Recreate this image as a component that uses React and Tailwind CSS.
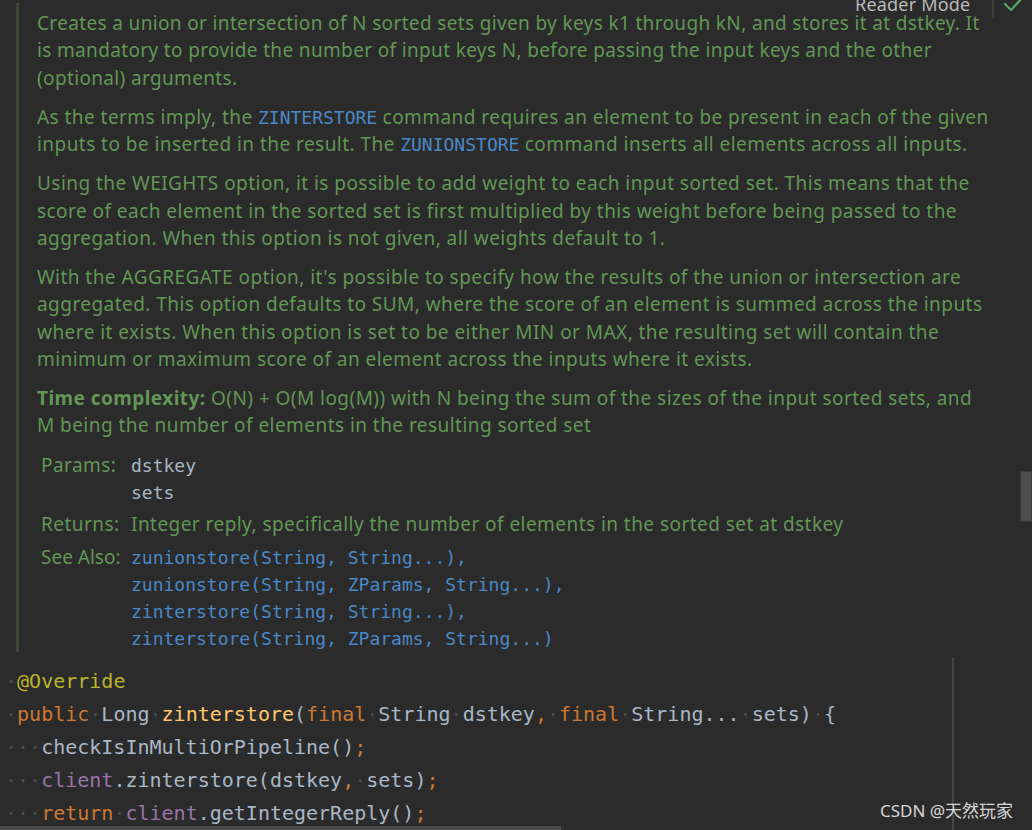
import React from "react";

const sans = "font-['Noto_Sans',sans-serif] tracking-[0.45px]";
const mono = "font-['DejaVu_Sans_Mono',monospace]";

const C = {
  txt: "text-[#a9b7c6]",
  kw: "text-[#cc7832]",
  ann: "text-[#bbb529]",
  fn: "text-[#ffc66d]",
  fld: "text-[#9876aa]",
  ws: "text-[#4d4d4d]",
};

// one code line = list of [text, colour]; "·" marks a visible space
const codeLines = [
  [["·", C.ws], ["@Override", C.ann]],
  [
    ["·", C.ws], ["public", C.kw], ["·", C.ws], ["Long", C.txt], ["·", C.ws],
    ["zinterstore", C.fn], ["(", C.txt], ["final", C.kw], ["·", C.ws], ["String", C.txt],
    ["·", C.ws], ["dstkey", C.txt], [",", C.kw], ["·", C.ws], ["final", C.kw], ["·", C.ws],
    ["String...", C.txt], ["·", C.ws], ["sets)", C.txt], ["·", C.ws], ["{", C.txt],
  ],
  [["···", C.ws], ["checkIsInMultiOrPipeline()", C.txt], [";", C.kw]],
  [["···", C.ws], ["client", C.fld], [".zinterstore(dstkey", C.txt], [",", C.kw], ["·", C.ws], ["sets)", C.txt], [";", C.kw]],
  [["···", C.ws], ["return", C.kw], ["·", C.ws], ["client", C.fld], [".getIntegerReply()", C.txt], [";", C.kw]],
];

const seeAlso = [
  "zunionstore(String, String...),",
  "zunionstore(String, ZParams, String...),",
  "zinterstore(String, String...),",
  "zinterstore(String, ZParams, String...)",
];

function Code({ children }) {
  return <span className={`${mono} text-[18px] tracking-normal text-[#4a88c7]`}>{children}</span>;
}

export default function App() {
  return (
    <div className="relative w-[1032px] h-[830px] overflow-hidden bg-[#2b2b2b]">
      {/* rendered javadoc */}
      <div className="mt-[3px] ml-[16px] w-[976px] border-l-[3px] border-[#3b4a36] pl-[18px] pt-[7px] text-[#629755]">
        <div className={`${sans} text-[19px] leading-[27.25px] whitespace-nowrap flex flex-col gap-[12px]`}>
          <p className="tracking-[0.35px]">
            Creates a union or intersection of N sorted sets given by keys k1 through kN, and stores it at dstkey. It<br />
            is mandatory to provide the number of input keys N, before passing the input keys and the other<br />
            (optional) arguments.
          </p>
          <p>
            As the terms imply, the <Code>ZINTERSTORE</Code> command requires an element to be present in each of the given<br />
            inputs to be inserted in the result. The <Code>ZUNIONSTORE</Code> command inserts all elements across all inputs.
          </p>
          <p>
            Using the WEIGHTS option, it is possible to add weight to each input sorted set. This means that the<br />
            score of each element in the sorted set is first multiplied by this weight before being passed to the<br />
            aggregation. When this option is not given, all weights default to 1.
          </p>
          <p>
            With the AGGREGATE option, it's possible to specify how the results of the union or intersection are<br />
            aggregated. This option defaults to SUM, where the score of an element is summed across the inputs<br />
            where it exists. When this option is set to be either MIN or MAX, the resulting set will contain the<br />
            minimum or maximum score of an element across the inputs where it exists.
          </p>
          <p>
            <b className="font-bold">Time complexity:</b> O(N) + O(M log(M)) with N being the sum of the sizes of the input sorted sets, and<br />
            M being the number of elements in the resulting sorted set
          </p>
        </div>

        <div className="mt-[12px] pl-[4px] grid grid-cols-[90px_1fr] leading-[27px]">
          <div className={`${sans} text-[19px] tracking-[0.2px]`}>Params:</div>
          <div className={`${mono} text-[18px] text-[#a9b7c6]`}>
            <div>dstkey</div>
            <div>sets</div>
          </div>
          <div className={`${sans} text-[19px] tracking-[0.2px] mt-[5px]`}>Returns:</div>
          <div className={`${sans} text-[19px] mt-[5px]`}>
            Integer reply, specifically the number of elements in the sorted set at dstkey
          </div>
          <div className={`${sans} text-[19px] mt-[6px] tracking-normal`}>See Also:</div>
          <div className={`${mono} text-[18px] text-[#4a88c7] mt-[6px]`}>
            {seeAlso.map((s) => (
              <div key={s}>{s}</div>
            ))}
          </div>
        </div>
      </div>

      {/* source code */}
      <div className={`${mono} text-[20px] leading-[33px] mt-[13px] pl-[5px] whitespace-pre`}>
        {codeLines.map((line, i) => (
          <div key={i}>
            {line.map(([t, c], j) => (
              <span key={j} className={c}>{t}</span>
            ))}
          </div>
        ))}
      </div>

      {/* right margin guide */}
      <div className="absolute left-[952px] top-[658px] bottom-0 w-[2px] bg-[#454545]" />

      {/* reader mode toolbar */}
      <div className="absolute left-[855px] top-[-9px] text-[18px] text-[#b9b9b9] font-['Noto_Sans',sans-serif] tracking-[0.2px]">Reader Mode</div>
      <div className="absolute left-[992px] top-0 w-[2px] h-[17px] bg-[#3c3c3c]" />
      <svg className="absolute left-[1003px] top-[-6px]" width="22" height="20" viewBox="0 0 22 20" fill="none">
        <path d="M2 10 L8 16 L20 3" stroke="#5aa55a" strokeWidth="2.2" strokeLinecap="round" strokeLinejoin="round" />
      </svg>

      {/* scrollbars */}
      <div className="absolute right-0 top-[471px] w-[12px] h-[51px] bg-[#4e4e4e] border border-[#3a3a3a]" />
      <div className="absolute left-0 bottom-0 w-[561px] h-[4px] bg-[#4b4b4b]" />

      {/* watermark */}
      <div className="absolute left-[880px] top-[798px] text-[17px] text-[#d6d6d6] font-['Noto_Sans','Noto_Sans_CJK_SC',sans-serif]">
        CSDN @天然玩家
      </div>
    </div>
  );
}
